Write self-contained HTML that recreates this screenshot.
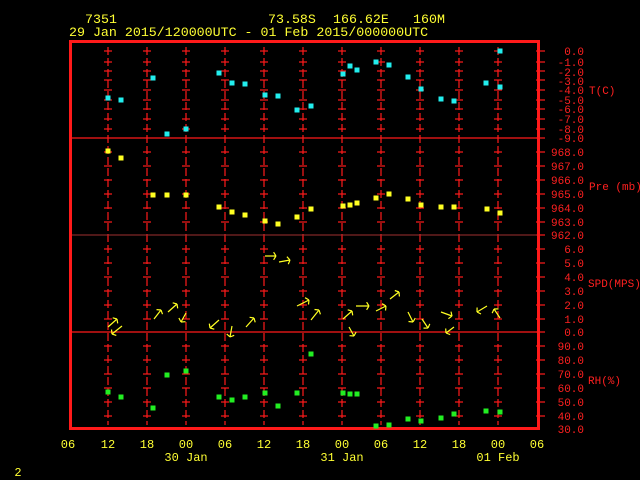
<!DOCTYPE html>
<html><head><style>
html,body{margin:0;padding:0;background:#000;width:640px;height:480px;overflow:hidden}
svg{display:block}
text{font-family:"Liberation Mono",monospace}
</style></head><body>
<svg id="s" width="640" height="480" xmlns="http://www.w3.org/2000/svg">
<rect width="640" height="480" fill="#000"/>
<g id="grid"></g>
<g fill="#ffff33" font-size="13.3">
<text x="85" y="23">7351</text>
<text x="268" y="23">73.58S</text>
<text x="333" y="23">166.62E</text>
<text x="413" y="23">160M</text>
<text x="69" y="36">29 Jan 2015/120000UTC - 01 Feb 2015/000000UTC</text>
</g>
<g fill="#ff2020" font-size="11" text-anchor="end">
<text x="584" y="55">0.0</text><text x="584" y="66">-1.0</text><text x="584" y="76">-2.0</text><text x="584" y="85">-3.0</text><text x="584" y="94">-4.0</text><text x="584" y="104">-5.0</text><text x="584" y="113">-6.0</text><text x="584" y="123">-7.0</text><text x="584" y="133">-8.0</text><text x="584" y="142">-9.0</text>
<text x="584" y="156">968.0</text><text x="584" y="170">967.0</text><text x="584" y="184">966.0</text><text x="584" y="198">965.0</text><text x="584" y="212">964.0</text><text x="584" y="226">963.0</text><text x="584" y="239">962.0</text>
<text x="584" y="253">6.0</text><text x="584" y="267">5.0</text><text x="584" y="281">4.0</text><text x="584" y="295">3.0</text><text x="584" y="309">2.0</text><text x="584" y="323">1.0</text><text x="584" y="336">0.0</text>
<text x="584" y="350">90.0</text><text x="584" y="364">80.0</text><text x="584" y="378">70.0</text><text x="584" y="392">60.0</text><text x="584" y="406">50.0</text><text x="584" y="420">40.0</text><text x="584" y="433">30.0</text>
</g>
<g fill="#ff2020" font-size="11">
<text x="589" y="94">T(C)</text>
<text x="589" y="190">Pre (mb)</text>
<text x="588" y="287">SPD(MPS)</text>
<text x="588" y="384">RH(%)</text>
</g>
<g fill="#ffff33" font-size="12" text-anchor="middle">
<text x="68" y="448">06</text><text x="108" y="448">12</text><text x="147" y="448">18</text><text x="186" y="448">00</text><text x="225" y="448">06</text><text x="264" y="448">12</text><text x="303" y="448">18</text><text x="342" y="448">00</text><text x="381" y="448">06</text><text x="420" y="448">12</text><text x="459" y="448">18</text><text x="498" y="448">00</text><text x="537" y="448">06</text>
<text x="186" y="461">30 Jan</text><text x="342" y="461">31 Jan</text><text x="498" y="461">01 Feb</text>
<text x="18" y="476">2</text>
</g>
<g id="pts"></g>
</svg>
<script>
var NS="http://www.w3.org/2000/svg",g=document.getElementById('grid'),p=document.getElementById('pts');
function el(par,t,a){var e=document.createElementNS(NS,t);for(var k in a)e.setAttribute(k,a[k]);par.appendChild(e);return e;}
var R="#ff1a1a";
var ticks=[51,62,71,80,90,100,109,119,129,152,166,180,194,208,222,249,263,277,291,305,319,346,360,374,388,402,416];
var xs=[108,147,186,225,264,303,342,381,420,459,498];
xs.forEach(function(x){
 el(g,'line',{x1:x,y1:47,x2:x,y2:425,stroke:R,'stroke-width':1.2,'stroke-dasharray':'8,3'});
 ticks.forEach(function(y){el(g,'line',{x1:x-4,y1:y,x2:x+4,y2:y,stroke:R,'stroke-width':1.2});});
});
ticks.concat([138,235,332]).forEach(function(y){el(g,'line',{x1:536,y1:y,x2:545,y2:y,stroke:R,'stroke-width':1.2});});
[138,332].forEach(function(y){el(g,'line',{x1:70,y1:y,x2:540,y2:y,stroke:R,'stroke-width':1.3});});
el(g,'line',{x1:70,y1:235,x2:540,y2:235,stroke:'#a03030','stroke-width':1});
el(g,'rect',{x:70.5,y:41.5,width:468,height:387,fill:'none',stroke:R,'stroke-width':3});
function sq(l,c){l.forEach(function(q){el(p,'rect',{x:q[0]-2.5,y:q[1]-2.5,width:5,height:5,fill:c});});}
sq([[108,98],[121,100],[153,78],[167,134],[186,129],[219,73],[232,83],[245,84],[265,95],[278,96],[297,110],[311,106],[343,74],[350,66],[357,70],[376,62],[389,65],[408,77],[421,89],[441,99],[454,101],[486,83],[500,51],[500,87]],'#22eeee');
sq([[108,151],[121,158],[153,195],[167,195],[186,195],[219,207],[232,212],[245,215],[265,221],[278,224],[297,217],[311,209],[343,206],[350,205],[357,203],[376,198],[389,194],[408,199],[421,205],[441,207],[454,207],[487,209],[500,213]],'#ffff22');
sq([[108,392],[121,397],[153,408],[167,375],[186,371],[219,397],[232,400],[245,397],[265,393],[278,406],[297,393],[311,354],[343,393],[350,394],[357,394],[376,426],[389,425],[408,419],[421,421],[441,418],[454,414],[486,411],[500,412]],'#22ee22');
var A=[[108,327,117,319],[122,326,112,334],[154,319,161,310],[168,312,177,304],[186,313,181,322],[219,320,210,328],[232,326,230,337],[246,327,254,318],[265,256,276,256],[279,262,290,260],[297,306,309,300],[311,320,319,310],[343,319,352,311],[349,327,354,336],[356,306,369,306],[376,311,386,306],[390,299,399,292],[408,312,413,322],[422,319,428,328],[441,312,452,316],[454,327,446,333],[487,306,477,312],[500,318,494,309]];
A.forEach(function(a){
 var dx=a[2]-a[0],dy=a[3]-a[1],L=Math.sqrt(dx*dx+dy*dy),ux=dx/L,uy=dy/L,h=4.5;
 var d='M'+a[0]+' '+a[1]+'L'+a[2]+' '+a[3];
 [[0.5],[-0.5]].forEach(function(s){var c=Math.cos(s[0]*2),sn=Math.sin(s[0]*2);var rx=-(ux*c-uy*sn),ry=-(ux*sn+uy*c);d+='M'+a[2]+' '+a[3]+'l'+(rx*h).toFixed(1)+' '+(ry*h).toFixed(1);});
 el(p,'path',{d:d,stroke:'#ffff22','stroke-width':1.2,fill:'none'});
});
</script>
</body></html>
